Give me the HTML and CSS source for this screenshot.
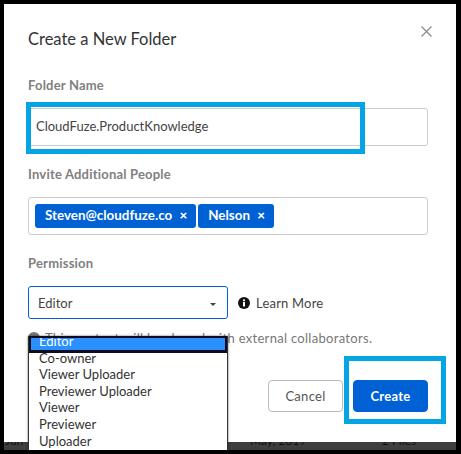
FILE: index.html
```html
<!DOCTYPE html>
<html lang="en">
<head>
    <meta charset="UTF-8">
    <title>Create a New Folder</title>
    <link rel="stylesheet" href="styles.css">
</head>
<body>
    <div class="frame">
        <div class="backdrop">
            <span class="behind-left">Jun</span>
            <span class="behind-mid">May, 2019</span>
            <span class="behind-right">2 Files</span>
        </div>
        <div class="modal">
            <div class="modal-head">
                <h2>Create a New Folder</h2>
                <svg class="close" width="11" height="11" viewBox="0 0 11 11">
                    <path d="M0.5 0.5L10.5 10.5M10.5 0.5L0.5 10.5" stroke="#8b8b8b" stroke-width="1.3" fill="none"/>
                </svg>
            </div>

            <label class="field-label label-name">Folder Name</label>
            <div class="name-wrap">
                <div class="text-input">CloudFuze.ProductKnowledge</div>
                <div class="highlight highlight-name"></div>
            </div>

            <label class="field-label label-invite">Invite Additional People</label>
            <div class="pill-input">
                <span class="pill">Steven@cloudfuze.co <b>×</b></span>
                <span class="pill">Nelson <b>×</b></span>
            </div>

            <label class="field-label label-perm">Permission</label>
            <div class="perm-row">
                <div class="select-box">
                    <span>Editor</span>
                    <i class="caret"></i>
                </div>
                <svg class="info" width="12" height="12" viewBox="0 0 12 12">
                    <circle cx="6" cy="6" r="6" fill="#111"/>
                    <rect x="5" y="5" width="2" height="4.5" fill="#fff"/>
                    <rect x="5" y="2.4" width="2" height="1.8" fill="#fff"/>
                </svg>
                <span class="learn">Learn More</span>
            </div>

            <div class="note">
                <i class="note-icon"></i>
                <span>This content will be shared with external collaborators.</span>
            </div>

            <div class="actions">
                <button class="btn-cancel">Cancel</button>
                <button class="btn-create">Create</button>
                <div class="highlight highlight-create"></div>
            </div>

            <ul class="dropdown">
                <li class="selected">Editor</li>
                <li>Co-owner</li>
                <li>Viewer Uploader</li>
                <li>Previewer Uploader</li>
                <li>Viewer</li>
                <li>Previewer</li>
                <li>Uploader</li>
            </ul>
        </div>
    </div>
</body>
</html>
```

FILE: styles.css
```css
html, body {
    margin: 0;
    padding: 0;
    background: #000;
}
body {
    width: 461px;
    height: 454px;
    overflow: hidden;
    font-family: Lato, sans-serif;
}
.frame {
    position: relative;
    width: 452px;
    height: 446px;
    margin: 4px 0 0 4px;
    background: #3e3e3e;
    overflow: hidden;
}
.backdrop {
    position: absolute;
    left: 0;
    right: 0;
    bottom: 0;
    height: 8px;
    font-size: 12px;
    line-height: 12px;
    color: #111;
}
.backdrop span {
    position: absolute;
    top: -7px;
}
.behind-left { left: 1px; }
.behind-mid { left: 246px; }
.behind-right { left: 378px; }
.modal {
    position: relative;
    height: 438px;
    background: #fff;
    padding: 24px 28px 0 24px;
    box-sizing: border-box;
}
.modal-head {
    display: flex;
    justify-content: space-between;
    align-items: flex-start;
}
.modal-head h2 {
    margin: 0;
    font-size: 16.5px;
    line-height: 22px;
    font-weight: 400;
    color: #333;
}
.close {
    margin: -2px -4px 0 0;
}
.field-label {
    display: block;
    font-size: 13px;
    line-height: 16px;
    font-weight: 700;
    color: #808080;
    letter-spacing: 0.2px;
}
.label-name { margin-top: 27px; }
.label-invite { margin-top: 20px; }
.label-perm { margin-top: 20px; }
.name-wrap {
    position: relative;
    margin-top: 15px;
}
.text-input {
    height: 38px;
    border: 1px solid #ccc;
    border-radius: 3px;
    box-sizing: border-box;
    padding: 0 7px;
    line-height: 34px;
    font-size: 13px;
    color: #444;
}
.highlight {
    position: absolute;
    border: 5px solid #05a5e4;
    box-sizing: border-box;
}
.highlight-name {
    left: -2px;
    top: -6px;
    width: 339px;
    height: 52px;
}
.pill-input {
    display: flex;
    gap: 2px;
    height: 38px;
    margin-top: 15px;
    padding: 6px;
    border: 1px solid #ccc;
    border-radius: 3px;
    box-sizing: border-box;
}
.pill {
    height: 24px;
    padding: 0 9px 0 10px;
    background: #0061d5;
    border-radius: 3px;
    color: #fff;
    font-size: 13.4px;
    font-weight: 700;
    line-height: 22px;
}
.pill b {
    margin-left: 4px;
}
.perm-row {
    display: flex;
    align-items: center;
    margin-top: 15px;
}
.select-box {
    display: flex;
    justify-content: space-between;
    align-items: center;
    width: 200px;
    height: 33px;
    padding: 0 10px 0 9px;
    border: 1px solid #0061d5;
    border-radius: 3px;
    box-sizing: border-box;
    font-size: 13px;
    color: #444;
}
.caret {
    width: 0;
    height: 0;
    margin: 3px 1px 0 0;
    border-left: 3px solid transparent;
    border-right: 3px solid transparent;
    border-top: 3px solid #444;
}
.info {
    margin-left: 10px;
}
.learn {
    margin-left: 6px;
    font-size: 13px;
    color: #444;
    letter-spacing: 0.2px;
}
.note {
    display: flex;
    align-items: center;
    gap: 5px;
    margin-top: 11px;
    font-size: 13px;
    line-height: 16px;
    color: #777;
    letter-spacing: 0.3px;
}
.note-icon {
    width: 12px;
    height: 12px;
    border-radius: 50%;
    background: #777;
}
.actions {
    position: relative;
    display: flex;
    justify-content: flex-end;
    gap: 10px;
    margin-top: 34px;
}
.actions button {
    width: 75px;
    height: 32px;
    border-radius: 4px;
    font-family: Lato, sans-serif;
    font-size: 13px;
    letter-spacing: 0.3px;
}
.btn-cancel {
    background: #fff;
    border: 1px solid #bbb;
    color: #555;
}
.btn-create {
    background: #0061d5;
    border: 1px solid #0061d5;
    color: #fff;
    font-weight: 700;
}
.highlight-create {
    right: -18px;
    top: -24px;
    width: 102px;
    height: 68px;
}
.dropdown {
    position: absolute;
    left: 24px;
    top: 332px;
    width: 200px;
    height: 114px;
    margin: 0;
    padding: 0;
    list-style: none;
    background: #fff;
    border: 1px solid #333;
    border-top: 0;
    border-bottom: 0;
    box-sizing: border-box;
    box-shadow: 0 0 2px rgba(0, 0, 0, 0.6);
    font-size: 13px;
    line-height: 16.6px;
    color: #333;
}
.dropdown li {
    padding-left: 10px;
}
.dropdown .selected {
    height: 17px;
    margin-bottom: -3.4px;
    line-height: 6px;
    background: #2a8fff;
    color: #fff;
    border: 2px solid #0b0b22;
    border-bottom-width: 3px;
    box-sizing: border-box;
    padding-left: 8px;
    overflow: hidden;
}
```
